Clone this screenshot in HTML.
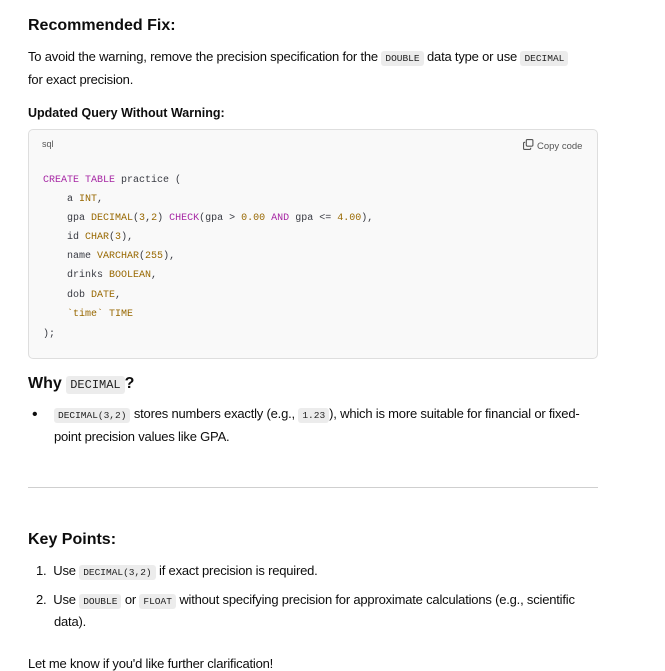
<!DOCTYPE html>
<html><head><meta charset="utf-8"><style>
body{margin:0;width:665px;height:658px;background:#fff;overflow:hidden;font-family:"Liberation Sans",sans-serif;color:#0d0d0d;position:relative}
.l{position:absolute;white-space:nowrap;font-size:13px;letter-spacing:-0.2px}
h{position:absolute;white-space:nowrap;font-weight:bold;color:#0d0d0d}
c{font-family:"Liberation Mono",monospace;font-size:9.5px;background:#ececec;border-radius:3px;padding:2px 4px;letter-spacing:0;color:#222}
.code{position:absolute;left:28px;top:129px;width:568px;height:228px;background:#f9f9f9;border:1px solid #dedede;border-radius:5px}
.cl{position:absolute;left:43px;font-family:"Liberation Mono",monospace;font-size:10px;color:#383a42;white-space:pre}
.k{color:#a626a4}.t{color:#986801}
</style></head><body>
<h style="left:28px;top:17px;font-size:16px">Recommended Fix:</h>
<div class="l" style="left:28px;top:49px">To avoid the warning, remove the precision specification for the <c>DOUBLE</c> data type or use <c>DECIMAL</c></div>
<div class="l" style="left:28px;top:72px">for exact precision.</div>
<h style="left:28px;top:106px;font-size:12.5px">Updated Query Without Warning:</h>
<div class="code"></div>
<div style="position:absolute;left:42px;top:139px;font-size:9px;color:#555">sql</div>
<div style="position:absolute;left:523px;top:139px;font-size:9.5px;color:#555"><svg width="11" height="11" viewBox="0 0 10 10" style="vertical-align:-1px;margin-right:3px"><rect x="3" y="0.5" width="6" height="6" rx="1" fill="none" stroke="#555"/><path d="M2 3H1.5a1 1 0 0 0-1 1v4.5a1 1 0 0 0 1 1H6a1 1 0 0 0 1-1V8" fill="none" stroke="#555"/></svg>Copy code</div>
<div class="cl" style="top:175px"><span class="k">CREATE</span> <span class="k">TABLE</span> practice (</div>
<div class="cl" style="top:194px">    a <span class="t">INT</span>,</div>
<div class="cl" style="top:213px">    gpa <span class="t">DECIMAL</span>(<span class="t">3</span>,<span class="t">2</span>) <span class="k">CHECK</span>(gpa &gt; <span class="t">0.00</span> <span class="k">AND</span> gpa &lt;= <span class="t">4.00</span>),</div>
<div class="cl" style="top:232px">    id <span class="t">CHAR</span>(<span class="t">3</span>),</div>
<div class="cl" style="top:251px">    name <span class="t">VARCHAR</span>(<span class="t">255</span>),</div>
<div class="cl" style="top:270px">    drinks <span class="t">BOOLEAN</span>,</div>
<div class="cl" style="top:290px">    dob <span class="t">DATE</span>,</div>
<div class="cl" style="top:309px">    <span class="t">`time`</span> <span class="t">TIME</span></div>
<div class="cl" style="top:329px">);</div>
<h style="left:28px;top:375px;font-size:16px">Why <c style="font-size:12px;font-weight:normal">DECIMAL</c>?</h>
<div class="l" style="left:32px;top:406px;font-size:16px">•</div>
<div class="l" style="left:54px;top:406px"><c>DECIMAL(3,2)</c> stores numbers exactly (e.g., <c>1.23</c>), which is more suitable for financial or fixed-</div>
<div class="l" style="left:54px;top:429px">point precision values like GPA.</div>
<div style="position:absolute;left:28px;top:487px;width:570px;height:1px;background:#cfcfcf"></div>
<h style="left:28px;top:531px;font-size:16px">Key Points:</h>
<div class="l" style="left:36px;top:563px">1.&nbsp; Use <c>DECIMAL(3,2)</c> if exact precision is required.</div>
<div class="l" style="left:36px;top:592px">2.&nbsp; Use <c>DOUBLE</c> or <c>FLOAT</c> without specifying precision for approximate calculations (e.g., scientific</div>
<div class="l" style="left:54px;top:614px">data).</div>
<div class="l" style="left:28px;top:656px">Let me know if you'd like further clarification!</div>
</body></html>
